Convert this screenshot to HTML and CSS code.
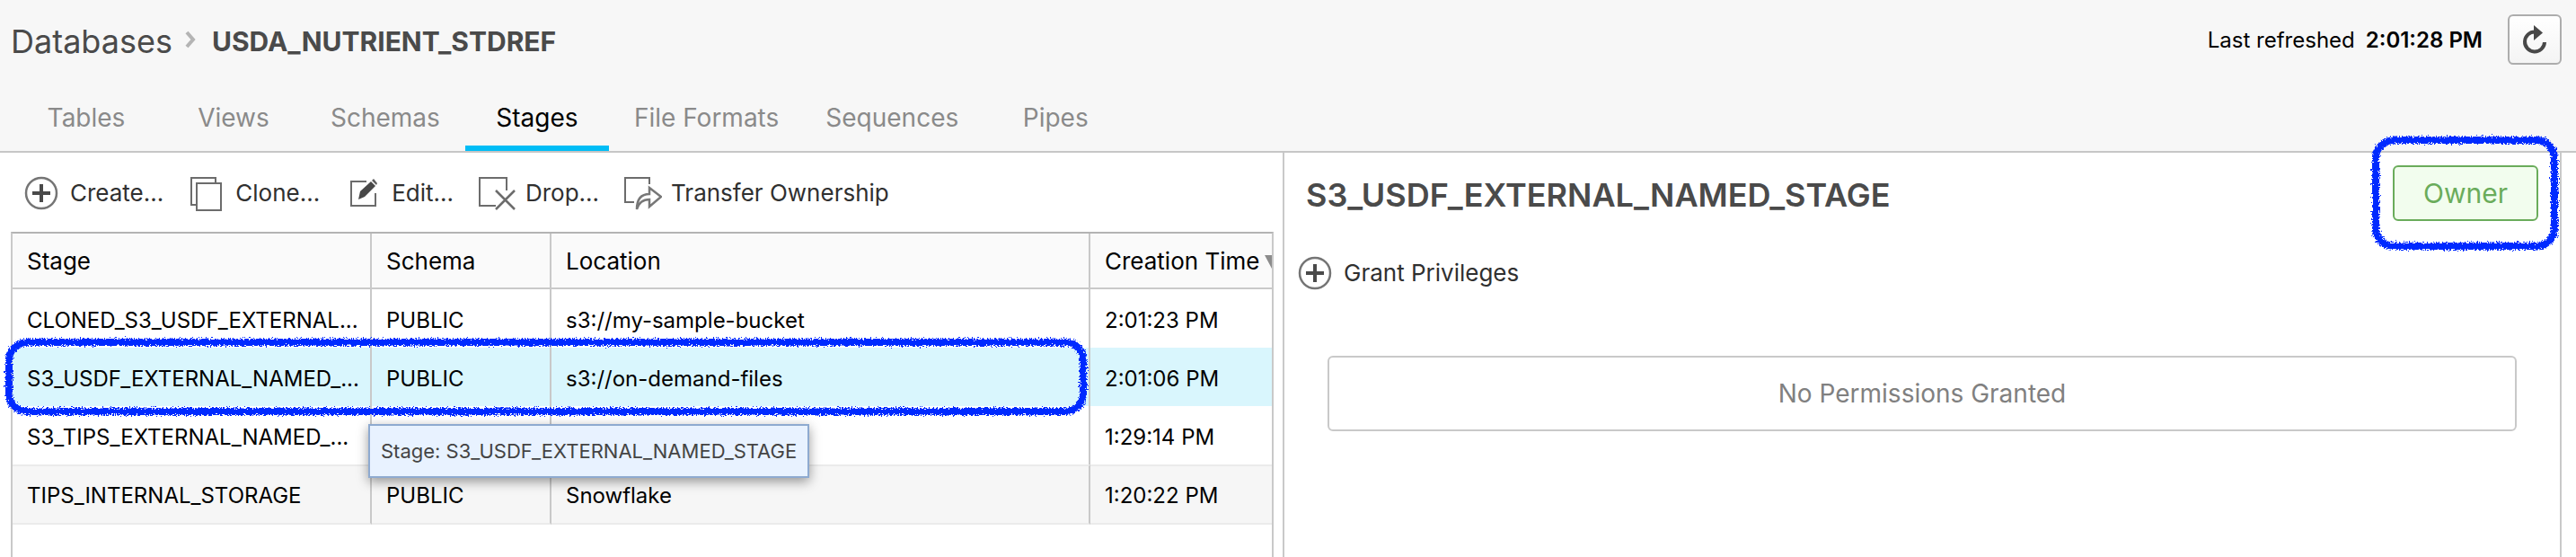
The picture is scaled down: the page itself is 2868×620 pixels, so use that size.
FILE: index.html
```html
<!DOCTYPE html>
<html lang="en">
<head>
<meta charset="utf-8">
<title>USDA_NUTRIENT_STDREF - Stages</title>
<link rel="stylesheet" href="styles.css">
</head>
<body>
<svg class="defs" width="0" height="0" aria-hidden="true">
  <filter id="crayon" x="-5%" y="-15%" width="110%" height="130%">
    <feTurbulence type="fractalNoise" baseFrequency="0.6" numOctaves="2" seed="4" result="noise"/>
    <feDisplacementMap in="SourceGraphic" in2="noise" scale="8" xChannelSelector="R" yChannelSelector="G"/>
  </filter>
</svg>
<header class="header">
  <div class="topline">
    <h1 class="crumbs">
      <a class="crumb-root" href="#">Databases</a>
      <svg class="crumb-sep" viewBox="0 0 14 20" aria-hidden="true"><path d="M2 2l7 8-7 8" fill="none" stroke="#b4b4b4" stroke-width="4"/></svg>
      <span class="crumb-current">USDA_NUTRIENT_STDREF</span>
    </h1>
    <div class="refresh">
      <span>Last refreshed</span>
      <strong class="refresh-time">2:01:28 PM</strong>
      <button class="refresh-button" type="button" aria-label="Refresh">
        <svg viewBox="0 0 30 34" width="30" height="34"><path d="M15.500 8.500A11 11 0 1 0 26 20" fill="none" stroke="#484848" stroke-width="4"/><path d="M14 1l10 8.500L14 18z" fill="#484848"/></svg>
      </button>
    </div>
  </div>
  <nav class="tabs">
    <a class="tab" href="#">Tables</a>
    <a class="tab" href="#">Views</a>
    <a class="tab" href="#">Schemas</a>
    <a class="tab tab-active" href="#" aria-current="page">Stages</a>
    <a class="tab" href="#">File Formats</a>
    <a class="tab" href="#">Sequences</a>
    <a class="tab" href="#">Pipes</a>
  </nav>
</header>
<main class="content">
  <section class="list-panel">
    <div class="toolbar">
      <button class="action" type="button">
        <svg class="icon" viewBox="0 0 42 40"><circle cx="20" cy="20" r="17" fill="none" stroke="#757575" stroke-width="2.500"/><path d="M20 10v20M10 20h20" stroke="#4a4a4a" stroke-width="4"/></svg>Create...</button>
      <button class="action" type="button">
        <svg class="icon" viewBox="0 0 42 40"><path d="M9 33H3V3h27v5" fill="none" stroke="#6c6c6c" stroke-width="2"/><rect x="9" y="9" width="27" height="30" fill="none" stroke="#6c6c6c" stroke-width="2"/></svg>Clone...</button>
      <button class="action" type="button">
        <svg class="icon" viewBox="0 0 42 40"><path d="M24 7H7v27h27V20" fill="none" stroke="#6c6c6c" stroke-width="2"/><path d="M15 27l2-9L29 7l5 5-12 12z" fill="#484848"/><path d="M30 6l2-2 4 5-1 2z" fill="#5c5c5c"/></svg>Edit...</button>
      <button class="action" type="button">
        <svg class="icon" viewBox="0 0 42 40"><path d="M31 17V3H1v31h18" fill="none" stroke="#6c6c6c" stroke-width="2"/><path d="M19 17l21 21M40 17L19 38" stroke="#6c6c6c" stroke-width="2.500"/></svg>Drop...</button>
      <button class="action" type="button">
        <svg class="icon" viewBox="0 0 42 40"><path d="M28 10V3H1v27h10" fill="none" stroke="#6c6c6c" stroke-width="2"/><path d="M28 14l13 10-13 11v-8c-7 0-12 4-14 11 0-11 5-17 14-17z" fill="none" stroke="#777" stroke-width="2.500"/></svg>Transfer Ownership</button>
    </div>
    <div class="grid">
      <table class="stages">
        <colgroup><col class="col-stage"><col class="col-schema"><col class="col-location"><col></colgroup>
        <thead>
          <tr>
            <th scope="col">Stage</th>
            <th scope="col">Schema</th>
            <th scope="col">Location</th>
            <th scope="col">Creation Time<svg class="sort" viewBox="0 0 16 16" aria-hidden="true"><path d="M0 0h16L8 15z" fill="#8c8c8c"/></svg></th>
          </tr>
        </thead>
        <tbody>
          <tr><td>CLONED_S3_USDF_EXTERNAL...</td><td>PUBLIC</td><td>s3://my-sample-bucket</td><td>2:01:23 PM</td></tr>
          <tr class="selected"><td>S3_USDF_EXTERNAL_NAMED_...<span class="marker marker-row"></span><span class="tooltip" role="tooltip">Stage: S3_USDF_EXTERNAL_NAMED_STAGE</span></td><td>PUBLIC</td><td>s3://on-demand-files</td><td>2:01:06 PM</td></tr>
          <tr><td>S3_TIPS_EXTERNAL_NAMED_...</td><td></td><td></td><td>1:29:14 PM</td></tr>
          <tr class="striped"><td>TIPS_INTERNAL_STORAGE</td><td>PUBLIC</td><td>Snowflake</td><td>1:20:22 PM</td></tr>
        </tbody>
      </table>
    </div>
  </section>
  <section class="detail-panel">
    <div class="detail-head">
      <h2 class="detail-title">S3_USDF_EXTERNAL_NAMED_STAGE</h2>
      <span class="owner">Owner<span class="marker marker-owner"></span></span>
    </div>
    <button class="action grant" type="button">
      <svg class="icon" viewBox="0 0 42 40"><circle cx="20" cy="20" r="17" fill="none" stroke="#757575" stroke-width="2.500"/><path d="M20 10v20M10 20h20" stroke="#4a4a4a" stroke-width="4"/></svg>Grant Privileges</button>
    <p class="empty">No Permissions Granted</p>
  </section>
</main>
</body>
</html>
```

FILE: styles.css
```css
* { box-sizing: border-box; }

body {
  margin: 0;
  min-height: 100vh;
  display: flex;
  flex-direction: column;
  background: #fff;
  color: #000;
  font-family: Inter, "Liberation Sans", sans-serif;
  font-size: 24px;
}

a { color: inherit; text-decoration: none; }

button {
  font: inherit;
  color: inherit;
  cursor: pointer;
}

.defs { position: absolute; }

.header {
  background: #f7f7f7;
  border-bottom: 2px solid #c6c6c6;
  padding-top: 16px;
}

.topline {
  display: flex;
  justify-content: space-between;
  align-items: center;
  height: 56px;
  padding: 0 16px 0 12px;
}

.crumbs {
  display: flex;
  align-items: center;
  margin: 0;
  padding-top: 4px;
  color: #4a4a4a;
  font-size: 36px;
  font-weight: 400;
}

.crumb-sep {
  width: 14px;
  height: 20px;
  margin: 0 16px 4px 14px;
}

.crumb-current {
  font-size: 30px;
  font-weight: 700;
}

.refresh {
  display: flex;
  align-items: center;
  gap: 12px;
}

.refresh-time { font-weight: 600; }

.refresh-button {
  display: flex;
  align-items: center;
  justify-content: center;
  width: 60px;
  height: 56px;
  margin-left: 16px;
  padding: 0;
  border: 2px solid #adadad;
  border-radius: 6px;
  background: linear-gradient(#fff, #f4f4f4);
}

.tabs {
  display: flex;
  height: 96px;
  padding-left: 14px;
}

.tab {
  min-width: 160px;
  margin: 0 2px;
  padding: 40px 24px 0;
  border-bottom: 6px solid transparent;
  color: #8a8a8a;
  font-size: 28px;
  line-height: 38px;
  text-align: center;
}

.tab-active {
  border-color: #00bdf6;
  color: #000;
}

.content {
  flex: 1;
  display: grid;
  grid-template-columns: 1430fr 1422fr;
  margin-right: 16px;
}

.list-panel {
  display: flex;
  flex-direction: column;
  border-right: 2px solid #c9c9c9;
  padding: 0 10px 0 12px;
}

.toolbar {
  display: flex;
  align-items: center;
  gap: 28px;
  height: 88px;
  padding: 2px 0 0 14px;
}

.action {
  display: flex;
  align-items: center;
  gap: 10px;
  padding: 0;
  border: 0;
  background: none;
  color: #303030;
  font-size: 26px;
  line-height: 40px;
  white-space: nowrap;
}

.icon {
  width: 42px;
  height: 40px;
}

.grid {
  flex: 1;
  border: 2px solid #c9c9c9;
  border-top-color: #b4b4b4;
  border-bottom: 0;
}

.stages {
  width: 100%;
  table-layout: fixed;
  border-collapse: separate;
  border-spacing: 0;
}

.col-stage { width: 400px; }
.col-schema { width: 200px; }
.col-location { width: 600px; }

th, td {
  padding: 0 0 0 16px;
  text-align: left;
  white-space: nowrap;
  border-right: 2px solid #c9c9c9;
}

th:last-child, td:last-child { border-right: 0; }

th {
  height: 62px;
  padding-top: 2px;
  border-bottom: 2px solid #c9c9c9;
  background: #fafafa;
  font-size: 26px;
  font-weight: 400;
  line-height: 32px;
  overflow: hidden;
}

.sort {
  width: 16px;
  height: 16px;
  margin-left: 6px;
}

td { height: 65px; padding-top: 4px; }

.selected { position: relative; }
.selected td { background: #d9f6fd; }

.striped td {
  height: 67px;
  padding-top: 2px;
  border-top: 2px solid #ebebeb;
  border-bottom: 2px solid #ebebeb;
  background: #f6f6f6;
}

.tooltip {
  position: absolute;
  top: 85px;
  left: 396px;
  z-index: 1;
  padding: 0 12px;
  border: 2px solid #8eaad0;
  background: #e8f2ff;
  box-shadow: 0 4px 12px rgba(0, 0, 0, 0.4);
  color: #444;
  font-size: 22px;
  line-height: 56px;
}

.marker {
  position: absolute;
  border: 8px solid #002bff;
  border-radius: 24px;
  filter: url(#crayon);
  pointer-events: none;
}

.marker-row {
  top: -10px;
  bottom: -10px;
  left: -8px;
  right: 206px;
}

.detail-panel {
  border-right: 2px solid #c9c9c9;
  padding: 14px 24px 0;
}

.detail-head {
  display: flex;
  align-items: center;
  justify-content: space-between;
}

.detail-title {
  margin: 0;
  padding-top: 4px;
  color: #4a4a4a;
  font-size: 36px;
  font-weight: 600;
}

.owner {
  position: relative;
  padding: 0 32px;
  border: 2px solid #6aac5b;
  border-radius: 6px;
  background: #f2fdee;
  color: #6aac5b;
  font-size: 30px;
  line-height: 58px;
}

.marker-owner {
  top: -34px;
  bottom: -34px;
  left: -25px;
  right: -24px;
}

.grant { margin: 38px 0 0 -10px; }

.empty {
  margin: 72px 24px 0;
  border: 2px solid #c9c9c9;
  border-radius: 6px;
  color: #808080;
  font-size: 28px;
  line-height: 80px;
  text-align: center;
}
```
